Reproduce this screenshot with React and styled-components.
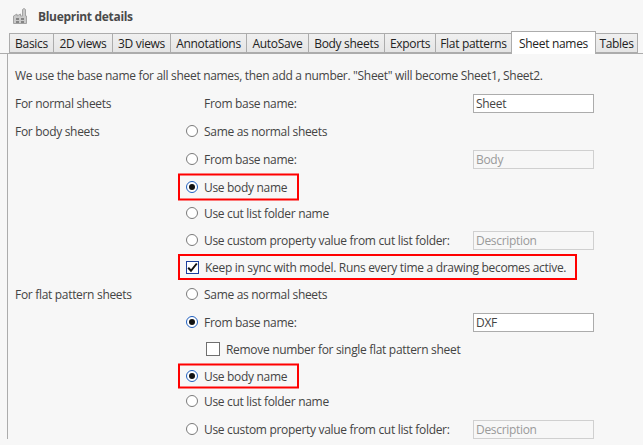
import React from "react";
import styled, { createGlobalStyle } from "styled-components";

const GlobalStyle = createGlobalStyle`
  html, body {
    margin: 0;
    padding: 0;
    background: #f7f7f7;
  }
  body {
    width: 643px;
    height: 445px;
    overflow: hidden;
    font-family: "Open Sans", "Noto Sans", sans-serif;
    font-size: 12px;
    letter-spacing: -0.31px;
    color: #444;
  }
`;

const Page = styled.div`
  width: 643px;
  height: 445px;
  overflow: hidden;
  background: #f7f7f7;
`;

const Header = styled.div`
  display: flex;
  align-items: center;
  gap: 11px;
  height: 31px;
  padding: 1px 0 0 13px;
  box-sizing: border-box;
  font-weight: 700;
  color: #4a4a4a;
`;

const TabStrip = styled.div`
  display: flex;
  align-items: flex-end;
  height: 22px;
  padding-left: 9px;
  border-bottom: 1px solid #acacac;
`;

const Tab = styled.div`
  box-sizing: border-box;
  display: flex;
  align-items: center;
  justify-content: center;
  width: ${props => props.$width}px;
  height: ${props => (props.$active ? 23 : 20)}px;
  margin-bottom: ${props => (props.$active ? -1 : 0)}px;
  margin-right: -1px;
  position: relative;
  z-index: ${props => (props.$active ? 1 : 0)};
  border: 1px solid #acacac;
  border-bottom: ${props => (props.$active ? "none" : "1px solid #acacac")};
  background: ${props => (props.$active ? "#fff" : "linear-gradient(#f0f0f0, #e5e5e5)")};
  color: #222;
  white-space: nowrap;
`;

const Panel = styled.div`
  margin-left: 7px;
  padding: 14px 0 0 7px;
  border-left: 1px solid #acacac;
`;

const Intro = styled.div`
  height: 16px;
  line-height: 16px;
  white-space: nowrap;
`;

const Row = styled.div`
  display: grid;
  grid-template-columns: 171px 287px 121px;
  align-items: center;
  height: 20px;
  margin-top: ${props => props.$gap ?? 7}px;
  white-space: nowrap;
`;

const Option = styled.div`
  display: inline-flex;
  align-items: center;
  gap: 6px;
  position: relative;
  padding-left: ${props => props.$indent || 0}px;
  grid-column: 2;

  ${props =>
    props.$boxWidth &&
    `&::after {
      content: "";
      position: absolute;
      left: -8px;
      top: 50%;
      transform: translateY(-50%);
      width: ${props.$boxWidth}px;
      height: ${props.$boxHeight}px;
      border: 2px solid #f00;
      box-sizing: border-box;
      pointer-events: none;
    }`}
`;

const Radio = styled.span`
  box-sizing: border-box;
  flex: none;
  display: flex;
  align-items: center;
  justify-content: center;
  width: 12px;
  height: 12px;
  border-radius: 50%;
  background: #fff;
  border: 1px solid ${props => (props.$checked ? "#1f5fbf" : "#7a7a7a")};

  &::before {
    content: "";
    display: ${props => (props.$checked ? "block" : "none")};
    width: 6px;
    height: 6px;
    border-radius: 50%;
    background: #111;
  }
`;

const Check = styled.span`
  box-sizing: border-box;
  flex: none;
  display: flex;
  align-items: center;
  justify-content: center;
  width: ${props => (props.$checked ? 13 : 14)}px;
  height: ${props => (props.$checked ? 13 : 14)}px;
  background: #fff;
  border: 1px solid ${props => (props.$checked ? "#1c3f9e" : "#6f6f6f")};
`;

const TextBox = styled.input`
  box-sizing: border-box;
  grid-column: 3;
  width: 121px;
  height: 19px;
  padding: 0 2px;
  font: inherit;
  letter-spacing: inherit;
  color: ${props => (props.disabled ? "#9a9a9a" : "#444")};
  background: ${props => (props.disabled ? "#f7f7f7" : "#fff")};
  border: 1px solid ${props => (props.disabled ? "#d0d0d0" : "#acacac")};
  outline: none;
`;

const BlueprintIcon = () => (
  <svg width="14" height="16" viewBox="0 0 14 16" fill="none">
    <path
      d="M0.500 15.500V8L4 6V8L7.500 6V8H9.500V1.500L11 0.500L12.500 1.500V8H13.500V15.500Z"
      fill="#c9c9c9"
      stroke="#a3a3a3"
    />
    <path d="M3 10h3v2H3zM8 10h3v2H8zM3 13h3v2H3zM8 13h3v2H8z" fill="#858585" />
  </svg>
);

const CheckMark = () => (
  <svg width="11" height="11" viewBox="0 0 11 11" fill="none">
    <path d="M1.200 5.800L4 8.800L9.800 1.500" stroke="#111" strokeWidth="2" />
  </svg>
);

const tabs = [
  ["Basics", 45],
  ["2D views", 60],
  ["3D views", 59],
  ["Annotations", 77],
  ["AutoSave", 63],
  ["Body sheets", 77],
  ["Exports", 52],
  ["Flat patterns", 77],
  ["Sheet names", 85],
  ["Tables", 43],
];

const RadioRow = ({ label, checked, gap, boxWidth, boxHeight, value, disabled, side }) => (
  <Row $gap={gap}>
    {side ? <span>{side}</span> : <span />}
    <Option $boxWidth={boxWidth} $boxHeight={boxHeight}>
      <Radio $checked={checked} />
      {label}
    </Option>
    {value !== undefined && <TextBox value={value} disabled={disabled} readOnly />}
  </Row>
);

export default function App() {
  return (
    <Page>
      <GlobalStyle />
      <Header>
        <BlueprintIcon />
        Blueprint details
      </Header>
      <TabStrip>
        {tabs.map(([name, width]) => (
          <Tab key={name} $width={width} $active={name === "Sheet names"}>
            {name}
          </Tab>
        ))}
      </TabStrip>
      <Panel>
        <Intro>We use the base name for all sheet names, then add a number. "Sheet" will become Sheet1, Sheet2.</Intro>
        <Row $gap={9}>
          <span>For normal sheets</span>
          <Option $indent={18}>From base name:</Option>
          <TextBox value="Sheet" readOnly />
        </Row>
        <RadioRow side="For body sheets" label="Same as normal sheets" gap={8} />
        <RadioRow label="From base name:" value="Body" disabled gap={8} />
        <RadioRow label="Use body name" checked boxWidth={121} boxHeight={27} gap={8} />
        <RadioRow label="Use cut list folder name" gap={6} />
        <RadioRow label="Use custom property value from cut list folder:" value="Description" disabled />
        <Row>
          <span />
          <Option $boxWidth={399} $boxHeight={26}>
            <Check $checked>
              <CheckMark />
            </Check>
            Keep in sync with model. Runs every time a drawing becomes active.
          </Option>
        </Row>
        <RadioRow side="For flat pattern sheets" label="Same as normal sheets" />
        <RadioRow label="From base name:" checked value="DXF" gap={8} />
        <Row>
          <span />
          <Option $indent={20}>
            <Check />
            Remove number for single flat pattern sheet
          </Option>
        </Row>
        <RadioRow label="Use body name" checked boxWidth={121} boxHeight={25} />
        <RadioRow label="Use cut list folder name" gap={5} />
        <RadioRow label="Use custom property value from cut list folder:" value="Description" disabled gap={8} />
      </Panel>
    </Page>
  );
}
